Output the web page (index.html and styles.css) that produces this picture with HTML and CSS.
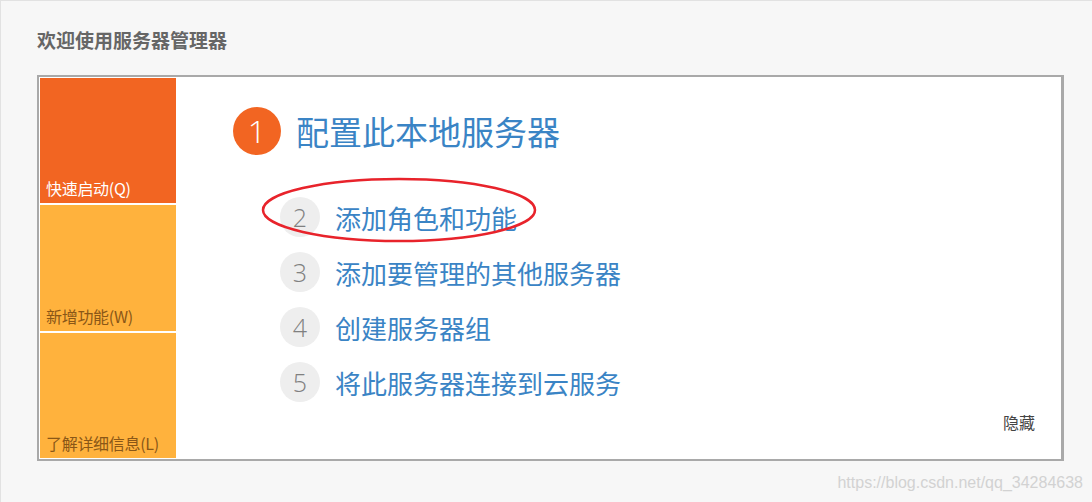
FILE: index.html
```html
<!DOCTYPE html>
<html>
<head>
  <title>服务器管理器</title>
  <link rel="stylesheet" href="styles.css">
</head>
<body>
  <div class="page">
    <h2 class="title">欢迎使用服务器管理器</h2>

    <div class="panel">
      <!-- Left tiles -->
      <div class="tiles">
        <div class="tile tile-quick">快速启动(Q)</div>
        <div class="tile">新增功能(W)</div>
        <div class="tile">了解详细信息(L)</div>
      </div>

      <!-- Steps -->
      <div class="content">
        <div class="step-main">
          <span class="num-big">1</span>
          <span class="step-title">配置此本地服务器</span>
        </div>

        <ul class="steps">
          <li class="marked">
            <span class="num">2</span><span class="step-link">添加角色和功能</span>
            <svg class="ring" width="280" height="68" viewBox="0 0 280 68">
              <ellipse cx="138" cy="34" rx="136" ry="31" fill="none" stroke="#e8232b" stroke-width="2.5"/>
            </svg>
          </li>
          <li><span class="num">3</span><span class="step-link">添加要管理的其他服务器</span></li>
          <li><span class="num">4</span><span class="step-link">创建服务器组</span></li>
          <li><span class="num">5</span><span class="step-link">将此服务器连接到云服务</span></li>
        </ul>

        <a class="hide">隐藏</a>
      </div>
    </div>

    <div class="watermark">https://blog.csdn.net/qq_34284638</div>
  </div>
</body>
</html>
```

FILE: styles.css
```css
body {
  margin: 0;
  background-color: #f7f7f7;
  font-family: "Noto Sans CJK SC", "Noto Sans", sans-serif;
}

.page {
  box-sizing: border-box;
  height: 502px;
  padding: 27px 28px 0 36px;
  border-top: 1px solid #e2e2e2;
  border-left: 1px solid #e2e2e2;
}

.title {
  margin: 0 0 23px 0;
  font-size: 19px;
  line-height: 24px;
  font-weight: bold;
  color: #666;
}

.panel {
  position: relative;
  display: flex;
  height: 386px;
  box-sizing: border-box;
  padding: 1px;
  background-color: #fff;
  border: 2px solid #a9a9a9;
  border-right-width: 3px;
}

.tiles {
  width: 136px;
  display: flex;
  flex-direction: column;
  gap: 2px;
}

.tile {
  flex: 1;
  display: flex;
  align-items: flex-end;
  padding: 0 0 5px 6px;
  background-color: #ffb23d;
  color: #8a5717;
  font-size: 16px;
  line-height: 20px;
  letter-spacing: -0.3px;
}

.tile-quick {
  background-color: #f26522;
  color: #fff;
}

.content {
  flex: 1;
  display: flex;
  flex-direction: column;
  padding: 29px 25px 26px 57px;
}

.step-main {
  display: flex;
  align-items: center;
  gap: 15px;
}

.num-big {
  width: 48px;
  height: 48px;
  border-radius: 50%;
  background-color: #f26522;
  color: #fff;
  font-family: "Open Sans", "Noto Sans", sans-serif;
  font-weight: 300;
  font-size: 32px;
  line-height: 48px;
  text-align: center;
}

.step-title {
  font-size: 33px;
  color: #3a84c5;
}

.steps {
  list-style: none;
  margin: 42px 0 0 0;
  padding: 0 0 0 47px;
  display: flex;
  flex-direction: column;
  gap: 15px;
}

.steps li {
  position: relative;
  display: flex;
  align-items: center;
  gap: 15px;
  height: 40px;
}

.num {
  width: 40px;
  height: 40px;
  border-radius: 50%;
  background-color: #eeeeee;
  color: #808080;
  font-family: "Open Sans", "Noto Sans", sans-serif;
  font-weight: 300;
  font-size: 25px;
  line-height: 40px;
  text-align: center;
}

.step-link {
  font-size: 26px;
  color: #3a84c5;
}

.ring {
  position: absolute;
  left: -19px;
  top: -21px;
}

.hide {
  margin-top: auto;
  align-self: flex-end;
  font-size: 16px;
  line-height: 20px;
  color: #444;
}

.watermark {
  margin: 12px -19px 0 0;
  text-align: right;
  font-family: "Liberation Sans", Arial, sans-serif;
  font-size: 16px;
  line-height: 20px;
  color: #d2d2d2;
}
```
